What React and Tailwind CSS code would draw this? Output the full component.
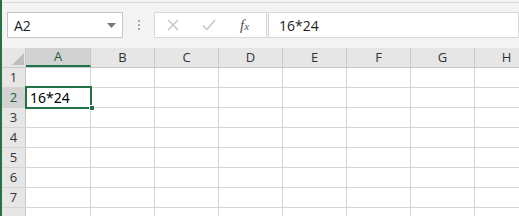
import React from "react";

const cols = ["A", "B", "C", "D", "E", "F", "G", "H"];
const rows = [1, 2, 3, 4, 5, 6, 7, 8];

const App = () => {
  return (
    <div
      className="relative w-[519px] h-[216px] overflow-hidden bg-white border-l-2 border-[#217346]"
      style={{ fontFamily: "'Open Sans', 'Noto Sans', sans-serif" }}
    >
      {/* formula bar */}
      <div className="h-[48px] bg-[#f3f3f3] border-t-[2px] border-t-[#f3f3f3]">
        <div className="h-px bg-[#dadada]" />
        <div className="flex items-center h-[26px] mt-[9px] pl-[5px]">
          <div className="flex items-center justify-between w-[116px] h-[26px] bg-white border border-[#c6c6c6] pl-[6px] pr-[6px]">
            <span className="text-[14px] text-[#222]">A2</span>
            <svg width="9" height="5" viewBox="0 0 9 5">
              <path d="M0 0 L9 0 L4.5 5 Z" fill="#777" />
            </svg>
          </div>
          <div className="w-[31px] flex flex-col items-center gap-[2px]">
            <span className="w-[2px] h-[2px] bg-[#aaa]" />
            <span className="w-[2px] h-[2px] bg-[#aaa]" />
            <span className="w-[2px] h-[2px] bg-[#aaa]" />
          </div>
          <div className="flex items-center w-[113px] h-[26px] bg-white border border-[#d8d8d8]">
            <svg className="ml-[12px]" width="12" height="12" viewBox="0 0 12 12">
              <path d="M1 1 L11 11 M11 1 L1 11" stroke="#c4c4c4" strokeWidth="1.4" />
            </svg>
            <svg className="ml-[23px]" width="14" height="12" viewBox="0 0 14 12">
              <path d="M1 6.5 L5 10.5 L13 1" stroke="#c4c4c4" strokeWidth="1.4" fill="none" />
            </svg>
            <span
              className="ml-[24px] text-[15px] italic text-[#555]"
              style={{ fontFamily: "'Liberation Serif', serif" }}
            >
              f<span className="text-[11px]">x</span>
            </span>
          </div>
          <div className="flex-1 h-[26px] ml-[1px] bg-white border border-[#d8d8d8] pl-[10px] flex items-center">
            <span className="text-[14px] text-[#222]">16*24</span>
          </div>
        </div>
      </div>

      {/* grid */}
      <div className="bg-white">
        <div className="flex h-[20px] bg-[#e6e6e6] border-b border-[#c8c8c8]">
          <div className="relative w-[24px] shrink-0 border-r border-[#c8c8c8]">
            <svg className="absolute right-[1px] bottom-[2px]" width="12" height="12" viewBox="0 0 12 12">
              <path d="M12 0 L12 12 L0 12 Z" fill="#bdbdbd" />
            </svg>
          </div>
          {cols.map((c, i) => (
            <div
              key={c}
              className={
                i === 0
                  ? "w-[65px] shrink-0 flex items-center justify-center text-[13px] text-[#1e5e3a] bg-[#d2d2d2] border-r border-[#c8c8c8] border-b-2 border-b-[#217346]"
                  : "w-[64px] shrink-0 flex items-center justify-center text-[13px] text-[#333] border-r border-[#c8c8c8]"
              }
            >
              {c}
            </div>
          ))}
        </div>
        {rows.map((r) => (
          <div key={r} className="flex h-[20px] border-b border-[#d4d4d4]">
            <div
              className={
                r === 2
                  ? "w-[24px] shrink-0 flex items-center justify-center text-[13px] text-[#1e5e3a] bg-[#d2d2d2] border-r border-[#c8c8c8]"
                  : "w-[24px] shrink-0 flex items-center justify-center text-[13px] text-[#333] bg-[#e6e6e6] border-r border-[#c8c8c8]"
              }
            >
              {r < 8 ? r : ""}
            </div>
            {cols.map((c, i) => (
              <div
                key={c}
                className={
                  i === 0
                    ? "w-[65px] shrink-0 border-r border-[#d4d4d4] flex items-center pl-[4px] text-[14px] text-black"
                    : "w-[64px] shrink-0 border-r border-[#d4d4d4]"
                }
                style={{ fontFamily: "'Noto Sans', sans-serif" }}
              >
                {r === 2 && i === 0 ? "16*24" : ""}
              </div>
            ))}
          </div>
        ))}
      </div>

      {/* selection */}
      <div className="absolute left-[23px] top-[86px] w-[67px] h-[23px] border-2 border-[#217346]" />
      <div className="absolute left-[87px] top-[105px] w-[6px] h-[6px] bg-[#217346] border border-white" />
    </div>
  );
};

export default App;
